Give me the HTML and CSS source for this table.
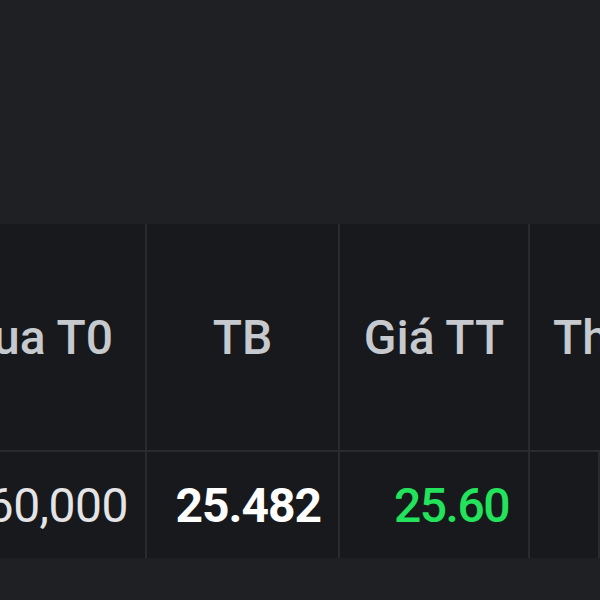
FILE: index.html
```html
<!DOCTYPE html>
<html lang="vi">
<head>
  <meta charset="UTF-8" />
  <meta name="viewport" content="width=device-width, initial-scale=1.0"/>
  <title>Danh mục</title>
<link rel="stylesheet" href="styles.css">
</head>
<body>
<div class="top"></div>
<div class="table">
  <div class="row head">
    <div class="cell c1"><span>Mua T0</span></div>
    <div class="cell c2"><span>TB</span></div>
    <div class="cell c3"><span>Giá TT</span></div>
    <div class="cell c4"><span>Thay đổi</span></div>
  </div>
  <div class="row data">
    <div class="cell c1 qty"><span>160,000</span></div>
    <div class="cell c2 avg"><span>25.482</span></div>
    <div class="cell c3 up"><span>25.60</span></div>
    <div class="cell c4"><span></span></div>
  </div>
</div>
</body>
</html>
```

FILE: styles.css
```css
body {
  margin: 0;
  width: 600px;
  height: 600px;
  overflow: hidden;
  background-color: #1f2023;
  font-family: Roboto, "Liberation Sans", sans-serif;
}

.top {
  height: 224px;
}

.table {
  background-color: #18191c;
}

.row {
  display: grid;
  grid-template-columns: 147px 193px 190px 1fr;
  border-bottom: 2px solid #2a2b2f;
}

.row.data {
  border-bottom: none;
}

.head {
  height: 226px;
}

.data {
  height: 106px;
}

.cell {
  display: flex;
  align-items: center;
  overflow: hidden;
  white-space: nowrap;
  border-right: 2px solid #2a2b2f;
  font-size: 48px;
}

.head .cell {
  justify-content: center;
  color: #c6c9cd;
  font-weight: 500;
}

.head .c1 {
  justify-content: flex-end;
  padding-right: 32px;
}

.head .c4 {
  justify-content: flex-start;
  padding-left: 23px;
  border-right: none;
}

.data .cell {
  justify-content: flex-end;
  padding-right: 17px;
}

.qty {
  color: #e4e4e6;
  letter-spacing: -0.5px;
}

.avg {
  color: #fff;
  font-weight: 700;
  letter-spacing: -1px;
  padding-right: 3px;
}

.data .up {
  color: #22e35b;
  font-weight: 500;
  letter-spacing: -1.5px;
  padding-right: 19px;
}
```
